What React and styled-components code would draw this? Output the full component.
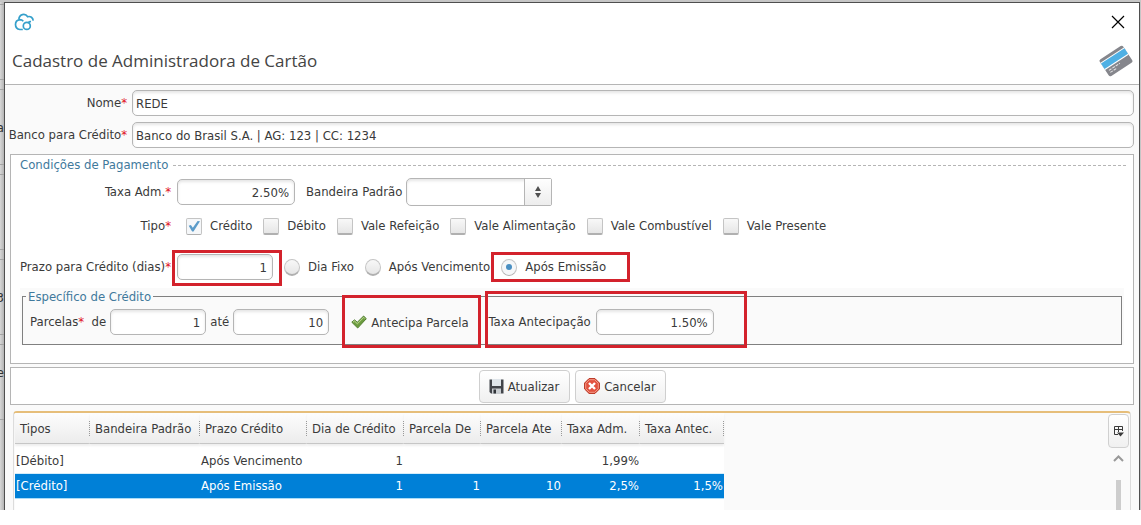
import React from "react";
import styled, { createGlobalStyle, css } from "styled-components";

const Global = createGlobalStyle`
  *, *::before, *::after { box-sizing: border-box; }
  body { margin: 0; background: #fff; }
  body, input, button, select {
    font-family: "DejaVu Sans Condensed", "DejaVu Sans", "Noto Sans", sans-serif;
    font-size: 13px;
    color: #3a3a3a;
  }
`;

const line = "#b5b5b5";

const Desktop = styled.div`
  display: grid;
  grid-template-columns: 4px minmax(0, 1fr) 1px;
  background: #c6c6c6;
  padding-top: 2px;
`;
const Behind = styled.div`
  display: flex;
  flex-direction: column;
  gap: 9px;
  overflow: hidden;
  padding-top: 2px;
  background: linear-gradient(90deg, #d8d8d8, #b4b4b4);
`;
const BehindPanel = styled.div`
  height: 76px;
  flex: none;
  border: solid #a5a5a5;
  border-width: 1px 0;
  display: flex;
  align-items: center;
  justify-content: flex-end;
  padding-bottom: ${(p) => (p.$raised ? "20px" : "0")};
  color: #333;
`;

const Dialog = styled.main`
  border: 1px solid #4f4f4f;
  border-bottom: 0;
  background: #fafafa;
  min-width: 0;
`;
const Header = styled.header`
  background: #fff;
  border-bottom: 1px solid ${line};
`;
const HeaderRow = styled.div`
  display: flex;
  align-items: center;
  justify-content: space-between;
  height: ${(p) => p.$height};
  padding: ${(p) => p.$pad};
`;
const CloseButton = styled.button`
  border: 0;
  padding: 0;
  width: 16px;
  height: 16px;
  background: none;
  display: grid;
  place-items: center;
`;
const Title = styled.h1`
  margin: 0;
  font: 400 17px/24px "Open Sans", "Noto Sans", sans-serif;
  color: #444;
`;

const Body = styled.form`
  padding: 5px 5px 0;
`;
const Fields = styled.div`
  display: grid;
  gap: 6px;
`;
const FieldRow = styled.div`
  display: grid;
  grid-template-columns: 117px minmax(0, 1fr);
  gap: 5px;
  align-items: center;
`;
const Label = styled.label`
  white-space: nowrap;
  justify-self: end;
  line-height: 16px;
`;
const Star = styled.span`
  color: #e01020;
`;
const TextBox = styled.input`
  height: 26px;
  width: ${(p) => p.$width || "100%"};
  padding: 0 ${(p) => (p.$number ? "5px" : "3px")};
  text-align: ${(p) => (p.$number ? "right" : "left")};
  border: 1px solid ${line};
  border-radius: 5px;
  background: #fff;
  box-shadow: inset 0 2px 3px #e6e6e6;
`;

const Panel = styled.section`
  margin-top: 6px;
  padding: 2px 9px 18px;
  border: 1px solid ${line};
  background: #fff;
`;
const PanelTitle = styled.h2`
  display: flex;
  align-items: center;
  gap: 5px;
  margin: 0 -2px 0 0;
  font-size: 13px;
  font-weight: 400;
  line-height: 16px;
  color: #41799c;
  &::after {
    content: "";
    flex: 1;
    border-top: 1px dashed ${line};
  }
`;
const Row = styled.div`
  display: grid;
  grid-template-columns: 151px minmax(0, 1fr);
  gap: 6px;
  align-items: center;
  margin-top: ${(p) => p.$top};
`;
const Items = styled.div`
  display: flex;
  align-items: center;
  gap: 11px;
  padding-left: ${(p) => p.$indent || "0"};
`;
const Pair = styled.div`
  display: flex;
  align-items: center;
  gap: 4px;
`;

const SelectBox = styled.div`
  position: relative;
  width: 146px;
  height: 28px;
`;
const Select = styled.select`
  appearance: none;
  width: 100%;
  height: 100%;
  border: 1px solid ${line};
  border-radius: 5px 2px 2px 5px;
  background: #fff;
  box-shadow: inset 0 2px 3px #e6e6e6;
`;
const SelectHandle = styled.span`
  position: absolute;
  inset: 1px 1px 1px auto;
  width: 27px;
  display: grid;
  place-items: center;
  border-left: 1px solid ${line};
  background: linear-gradient(#fefefe, #ededed);
  pointer-events: none;
`;

const marked = css`
  position: relative;
  &::after {
    content: "";
    position: absolute;
    inset: ${(p) => p.$around};
    border: 3px solid #d3222c;
    pointer-events: none;
  }
`;
const Choice = styled.label`
  display: flex;
  align-items: center;
  gap: 8px;
  white-space: nowrap;
  line-height: 18px;
  ${(p) => p.$around && marked}
`;
const Marked = styled.div`
  display: flex;
  align-items: center;
  gap: 5px;
  white-space: nowrap;
  ${marked}
`;
const Tick = styled.input`
  appearance: none;
  margin: 0;
  width: 16px;
  height: 17px;
  border: 1px solid #c4c4c4;
  border-bottom: 2px solid #b0b0b0;
  border-radius: ${(p) => (p.type === "radio" ? "50%" : "2px")};
  background: linear-gradient(#f8f8f8, #e6e6e6);
  display: grid;
  place-items: center;
  &:checked { background: #f5f7f9; border-bottom-width: 1px; }
  &[type="checkbox"]:checked::after {
    content: "";
    width: 12px;
    height: 11px;
    background: #5b9bc9;
    clip-path: polygon(6% 48%, 24% 42%, 40% 66%, 80% 4%, 100% 6%, 46% 100%, 34% 100%);
  }
  &[type="radio"]:checked::after {
    content: "";
    width: 6px;
    height: 6px;
    border-radius: 50%;
    background: #4a8fc2;
  }
`;

const Inset = styled.div`
  margin-top: 8px;
  padding: 0 2px;
  background: #fafafa;
`;
const Group = styled.fieldset`
  margin: 0;
  min-width: 0;
  border: 1px solid #808080;
  padding: 4px 7px 9px;
`;
const Legend = styled.legend`
  margin-left: -4px;
  padding: 0 2px;
  line-height: 17px;
  color: #41799c;
`;
const Installments = styled.div`
  display: flex;
  align-items: center;
  gap: 4px;
`;
const Toggle = styled.button`
  display: flex;
  align-items: center;
  gap: 4px;
  margin: 0 16px 0 18px;
  padding: 0;
  height: 26px;
  border: 0;
  background: none;
  white-space: nowrap;
  ${marked}
`;

const Actions = styled.div`
  margin-top: 3px;
  height: 38px;
  display: flex;
  align-items: center;
  justify-content: center;
  gap: 5px;
  border: 1px solid ${line};
  background: #fff;
`;
const ActionButton = styled.button`
  height: 33px;
  width: 91px;
  display: flex;
  align-items: center;
  justify-content: center;
  gap: 4px;
  padding: 0;
  border: 1px solid #cfcfcf;
  border-radius: 4px;
  background: linear-gradient(#fff, #f0f0f0);
`;

const ListBox = styled.div`
  margin: 6px 3px 0;
  height: 99px;
  display: flex;
  justify-content: space-between;
  overflow: hidden;
  padding-left: 1px;
  border: 1px solid #dcdcdc;
  border-top: 2px solid #e6be7a;
  border-bottom: 0;
  border-radius: 4px 4px 0 0;
`;
const TableArea = styled.div`
  background: #fff;
`;
const Table = styled.table`
  table-layout: fixed;
  width: 709px;
  border-collapse: separate;
  border-spacing: 0;
`;
const Th = styled.th`
  height: 35px;
  padding: 0 0 5px;
  font-weight: 400;
  text-align: left;
  white-space: nowrap;
`;
const ThInner = styled.div`
  height: 31px;
  display: flex;
  align-items: center;
  padding-left: 5px;
  border-bottom: 1px solid #c6c6c6;
  background: linear-gradient(#fdfdfd, #ececec);
  box-shadow: 0 2px 2px #eee;
  &::after {
    content: "";
    margin-left: auto;
    height: 15px;
    border-right: 1px dotted #999;
  }
`;
const Tr = styled.tr`
  ${(p) => p.$selected && css`color: #fff; background: #0080d7;`}
`;
const Td = styled.td`
  height: 25px;
  padding: 0 1px 1px;
  text-align: ${(p) => (p.$number ? "right" : "left")};
  white-space: nowrap;
  border-bottom: 1px solid ${(p) => (p.$selected ? "#a9dcf8" : "#d5edfa")};
`;
const Rail = styled.div`
  width: 24px;
  padding: 1px 1px 0;
  display: flex;
  flex-direction: column;
  align-items: center;
`;
const ColumnsButton = styled.button`
  width: 21px;
  height: 34px;
  flex: none;
  padding: 0;
  display: grid;
  place-items: center;
  border: 1px solid #d0d0d0;
  border-radius: 4px;
  background: linear-gradient(#fff, #f0f0f0);
`;
const ScrollUp = styled.svg`
  flex: none;
  margin: 7px 0 18px;
`;
const Thumb = styled.div`
  width: 5px;
  flex: 1;
  background: #cdcdcd;
`;

const CloudLogo = () => (
  <svg width="22" height="20" viewBox="0 0 22 20" fill="none" stroke="#35a0cb" strokeWidth="1.7">
    <path d="M9.800 17.500H6.800A5 5 0 0 1 6.800 7.600A4.600 4.600 0 0 1 10.300 9.200" />
    <path d="M5.900 7.300C6.100 2.300 12 .6 14.700 4.700C17.600 3.900 20 5.800 20.200 8.600" />
    <circle cx="13.800" cy="13.900" r="3.500" />
    <path d="M15.500 10.700C16 9.900 17 9.500 18 9.700" />
  </svg>
);
const CloseIcon = () => (
  <svg width="14" height="14" viewBox="0 0 14 14" stroke="#000" strokeWidth="1.2">
    <path d="M1 1l12 12M13 1L1 13" />
  </svg>
);
const CardIcon = () => (
  <svg width="34" height="32" viewBox="0 0 34 32">
    <g transform="rotate(-33 17 16)">
      <rect x="3" y="6" width="28" height="20" rx="2" fill="#85868c" />
      <rect x="3" y="9" width="28" height="8.500" fill="#fff" />
      <rect x="3" y="10" width="28" height="6.500" fill="#4fb0e4" />
      <path d="M6 20h13M6 22.500h7" stroke="#e4e4e6" strokeWidth="1" strokeDasharray="3 1" />
    </g>
  </svg>
);
const CheckIcon = () => (
  <svg width="16" height="14" viewBox="0 0 16 14">
    <path d="M.8 7.200L3.500 4.900L6.300 7.300L12.600 1L15.300 3.700L6.700 13Z" fill="#7aa64b" stroke="#4c7a2d" strokeLinejoin="round" />
    <path d="M2 7L3.500 6L6.300 8.600L12.600 2.300L13.800 3.500" fill="none" stroke="#b5d58b" />
    <path d="M3 8.200L6.500 11.200L13.300 4.200" fill="none" stroke="#6a9a3f" strokeWidth="1.600" />
  </svg>
);
const SaveIcon = () => (
  <svg width="15" height="15" viewBox="0 0 15 15">
    <path d="M.5 .5H14.500V14.500H2L.5 13Z" fill="#41444a" />
    <rect x="3" y="0" width="9" height="7" fill="#dfe5ea" />
    <rect x="3" y="9.500" width="9" height="5.500" fill="#c9cdd1" />
    <rect x="4.500" y="10.500" width="2.500" height="4" fill="#303338" />
  </svg>
);
const CancelIcon = () => (
  <svg width="16" height="16" viewBox="0 0 16 16">
    <path d="M5 .6H11L15.400 5V11L11 15.400H5L.6 11V5Z" fill="#e2523f" stroke="#b8321f" />
    <path d="M5.300 1.700H10.700L14.300 5.300V10.700L10.700 14.300H5.300L1.700 10.700V5.300Z" fill="none" stroke="#f29a88" />
    <path d="M5 5L11 11M11 5L5 11" stroke="#fff" strokeWidth="2.400" />
  </svg>
);
const ColumnsIcon = () => (
  <svg width="11" height="11" viewBox="0 0 11 11" fill="none" stroke="#3a3a3a">
    <path d="M5 8.500H1.500V.5H9.500V5M1 3.500H10M5.500 1V6" />
    <path d="M4 6.500H11L7.500 10.500Z" fill="#3a3a3a" stroke="none" />
  </svg>
);

const kinds = ["Crédito", "Débito", "Vale Refeição", "Vale Alimentação", "Vale Combustível", "Vale Presente"];
const columns = [
  ["Tipos", 75], ["Bandeira Padrão", 110], ["Prazo Crédito", 107], ["Dia de Crédito", 97],
  ["Parcela De", 77], ["Parcela Ate", 81], ["Taxa Adm.", 78], ["Taxa Antec.", 84],
];
const rows = [
  { cells: ["[Débito]", "", "Após Vencimento", "1", "", "", "1,99%", ""] },
  { cells: ["[Crédito]", "", "Após Emissão", "1", "1", "10", "2,5%", "1,5%"], selected: true },
];

export default function App() {
  return (
    <>
      <Global />
      <Desktop>
        <Behind aria-hidden="true">
          <BehindPanel />
          <BehindPanel>a</BehindPanel>
          <BehindPanel />
          <BehindPanel>3</BehindPanel>
          <BehindPanel $raised>e</BehindPanel>
        </Behind>
        <Dialog>
          <Header>
            <HeaderRow $height="37px" $pad="0 13px 0 8px">
              <CloudLogo />
              <CloseButton type="button" aria-label="Fechar"><CloseIcon /></CloseButton>
            </HeaderRow>
            <HeaderRow $height="44px" $pad="0 6px 2px 7px">
              <Title>Cadastro de Administradora de Cartão</Title>
              <CardIcon />
            </HeaderRow>
          </Header>
          <Body onSubmit={(e) => e.preventDefault()}>
            <Fields>
              <FieldRow>
                <Label htmlFor="nome">Nome<Star>*</Star></Label>
                <TextBox id="nome" defaultValue="REDE" />
              </FieldRow>
              <FieldRow>
                <Label htmlFor="banco">Banco para Crédito<Star>*</Star></Label>
                <TextBox id="banco" defaultValue="Banco do Brasil S.A. | AG: 123 | CC: 1234" />
              </FieldRow>
            </Fields>

            <Panel>
              <PanelTitle>Condições de Pagamento</PanelTitle>
              <Row $top="5px">
                <Label htmlFor="taxa">Taxa Adm.<Star>*</Star></Label>
                <Items>
                  <TextBox id="taxa" $number $width="118px" defaultValue="2.50%" />
                  <Pair>
                    <Label htmlFor="bandeira">Bandeira Padrão</Label>
                    <SelectBox>
                      <Select id="bandeira"><option value=""></option></Select>
                      <SelectHandle>
                        <svg width="6" height="12" viewBox="0 0 6 12" fill="#505050">
                          <path d="M0 5L3 0L6 5ZM0 7H6L3 12Z" />
                        </svg>
                      </SelectHandle>
                    </SelectBox>
                  </Pair>
                </Items>
              </Row>
              <Row $top="11px">
                <Label as="span">Tipo<Star>*</Star></Label>
                <Items $indent="9px">
                  {kinds.map((k, i) => (
                    <Choice key={k}><Tick type="checkbox" defaultChecked={i === 0} />{k}</Choice>
                  ))}
                </Items>
              </Row>
              <Row $top="19px">
                <Label htmlFor="prazo">Prazo para Crédito (dias)<Star>*</Star></Label>
                <Items>
                  <Marked $around="-4px -9px -6px -5px">
                    <TextBox id="prazo" $number $width="96px" defaultValue="1" />
                  </Marked>
                  <Choice><Tick type="radio" name="base" />Dia Fixo</Choice>
                  <Choice><Tick type="radio" name="base" />Após Vencimento</Choice>
                  <Choice $around="-6px -24px -6px -10px"><Tick type="radio" name="base" defaultChecked />Após Emissão</Choice>
                </Items>
              </Row>
              <Inset>
                <Group>
                  <Legend>Específico de Crédito</Legend>
                  <Installments>
                    <Label htmlFor="de">Parcelas<Star>*</Star>&nbsp; de</Label>
                    <TextBox id="de" $number $width="96px" defaultValue="1" />
                    <Label htmlFor="ate">até</Label>
                    <TextBox id="ate" $number $width="96px" defaultValue="10" />
                    <Toggle type="button" $around="-14px -12px -13px -9px"><CheckIcon />Antecipa Parcela</Toggle>
                    <Marked $around="-18px -33px -13px -4px">
                      <Label htmlFor="antecipacao">Taxa Antecipação</Label>
                      <TextBox id="antecipacao" $number $width="118px" defaultValue="1.50%" />
                    </Marked>
                  </Installments>
                </Group>
              </Inset>
            </Panel>

            <Actions>
              <ActionButton type="submit"><SaveIcon />Atualizar</ActionButton>
              <ActionButton type="button"><CancelIcon />Cancelar</ActionButton>
            </Actions>

            <ListBox>
              <TableArea>
                <Table>
                  <colgroup>{columns.map(([n, w]) => <col key={n} width={w} />)}</colgroup>
                  <thead>
                    <tr>{columns.map(([n]) => <Th key={n} scope="col"><ThInner>{n}</ThInner></Th>)}</tr>
                  </thead>
                  <tbody>
                    {rows.map((r) => (
                      <Tr key={r.cells[0]} $selected={r.selected}>
                        {r.cells.map((c, i) => (
                          <Td key={i} $number={i > 2} $selected={r.selected}>{c}</Td>
                        ))}
                      </Tr>
                    ))}
                  </tbody>
                </Table>
              </TableArea>
              <Rail>
                <ColumnsButton type="button" aria-label="Colunas"><ColumnsIcon /></ColumnsButton>
                <ScrollUp width="11" height="7" viewBox="0 0 11 7" fill="none" stroke="#999" strokeWidth="2">
                  <path d="M1 6L5.500 1.500L10 6" />
                </ScrollUp>
                <Thumb />
              </Rail>
            </ListBox>
          </Body>
        </Dialog>
        <div />
      </Desktop>
    </>
  );
}
